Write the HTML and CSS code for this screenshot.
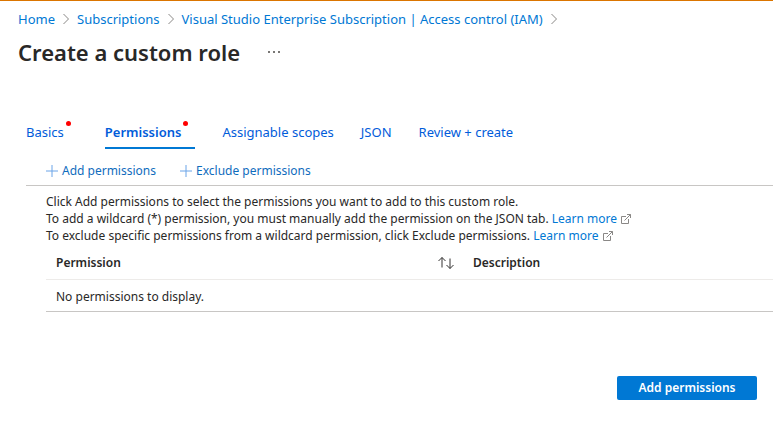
FILE: index.html
```html
<!DOCTYPE html>
<html lang="en">
<head>
<meta charset="utf-8">
<meta name="viewport" content="width=device-width, initial-scale=1">
<title>Create a custom role</title>
<link rel="stylesheet" href="styles.css">
</head>
<body>
<svg class="sprite" aria-hidden="true">
  <symbol id="chevron" viewBox="0 0 8 12"><path d="M1.5 1 6.5 6 1.5 11"/></symbol>
  <symbol id="plus" viewBox="0 0 12 12"><path d="M6 0v12M0 6h12"/></symbol>
  <symbol id="external" viewBox="0 0 12 12"><path d="M6 3.5H1.500v7h7V6M7 1.500h3.500V5M10.500 1.500 4.500 7.500"/></symbol>
  <symbol id="sort" viewBox="0 0 18 14"><path d="M5 1.500v10M1.500 5 5 1.500 8.500 5M13 2.500v10M9.500 9 13 12.500 16.500 9"/></symbol>
</svg>
<header class="header">
  <nav class="breadcrumb" aria-label="Breadcrumb">
    <a href="#">Home</a><svg class="chevron"><use href="#chevron"/></svg>
    <a href="#">Subscriptions</a><svg class="chevron"><use href="#chevron"/></svg>
    <a href="#">Visual Studio Enterprise Subscription | Access control (IAM)</a><svg class="chevron"><use href="#chevron"/></svg>
  </nav>
  <div class="title-row">
    <h1>Create a custom role</h1>
    <button class="more" type="button" aria-label="More"><svg viewBox="0 0 12 2"><path d="M0 0h2v2H0zM5 0h2v2H5zM10 0h2v2h-2z"/></svg></button>
  </div>
</header>
<main class="main">
  <nav class="tabs" aria-label="Steps">
    <a class="tab flagged" href="#">Basics</a>
    <a class="tab flagged active" href="#" aria-current="step">Permissions</a>
    <a class="tab" href="#">Assignable scopes</a>
    <a class="tab" href="#">JSON</a>
    <a class="tab" href="#">Review + create</a>
  </nav>
  <div class="toolbar">
    <button class="command" type="button"><svg><use href="#plus"/></svg>Add permissions</button>
    <button class="command" type="button"><svg><use href="#plus"/></svg>Exclude permissions</button>
  </div>
  <section class="content">
    <p>Click Add permissions to select the permissions you want to add to this custom role.</p>
    <p>To add a wildcard (*) permission, you must manually add the permission on the JSON tab. <a href="#">Learn more <svg class="external"><use href="#external"/></svg></a></p>
    <p>To exclude specific permissions from a wildcard permission, click Exclude permissions. <a href="#">Learn more <svg class="external"><use href="#external"/></svg></a></p>
    <table class="grid">
      <thead>
        <tr>
          <th class="permission" scope="col"><div class="heading">Permission<svg class="sort"><use href="#sort"/></svg></div></th>
          <th scope="col">Description</th>
        </tr>
      </thead>
      <tbody>
        <tr><td colspan="2">No permissions to display.</td></tr>
      </tbody>
    </table>
  </section>
  <div class="actions"><button class="primary" type="button">Add permissions</button></div>
</main>
</body>
</html>
```

FILE: styles.css
```css
* { box-sizing: border-box; }
body {
  margin: 0;
  border-top: 1px solid #db7500;
  background: #fff;
  color: #292827;
  font: 12px/17px "Segoe UI", "Noto Sans", "Open Sans", sans-serif;
}
a { color: #0078d4; text-decoration: none; }
button { border: 0; padding: 0; background: none; font: inherit; color: inherit; }
svg { fill: none; stroke: currentColor; }
h1, p { margin: 0; }
.sprite { position: absolute; width: 0; height: 0; }

.header { padding: 8px 18px 0; }
.breadcrumb { display: flex; align-items: center; gap: 7px; font-size: 13px; line-height: 20px; white-space: nowrap; }
.chevron { width: 8px; height: 12px; color: #8a8886; }
.title-row { display: flex; align-items: center; gap: 28px; margin-top: 7px; }
h1 { font-size: 22px; line-height: 32px; font-weight: 600; }
.more { display: flex; color: #797775; }
.more svg { width: 12px; height: 2px; fill: currentColor; stroke: none; }

.main { padding: 48px 0 24px 26px; }
.tabs { display: flex; gap: 27px; font-size: 13px; }
.tab { position: relative; padding: 7px 0 6px; line-height: 18px; color: #015cda; white-space: nowrap; }
.flagged { padding-right: 14px; }
.flagged::after {
  content: "";
  position: absolute;
  top: 5px;
  right: 7px;
  width: 5px;
  height: 5px;
  border-radius: 50%;
  background: #f00;
}
.active { border-bottom: 2px solid #0078d4; font-weight: 600; }
.toolbar { display: flex; gap: 24px; padding: 12px 20px 4px; border-bottom: 1px solid #c8c6c4; }
.command { display: flex; align-items: center; gap: 4px; line-height: 20px; color: #0f6cbd; }
.command svg { width: 12px; height: 12px; color: #6ba4e8; }

.content { padding: 7px 0 0 20px; }
.external { width: 12px; height: 12px; vertical-align: -2px; color: #8a8886; }
.grid { width: 100%; border-collapse: collapse; border-bottom: 1px solid #c8c6c4; table-layout: fixed; }
.grid td { padding: 8px 10px 6px; }
.grid th { padding: 10px 10px 8px; text-align: left; font-weight: 600; border-bottom: 1px solid #edebe9; }
.grid .permission { width: 417px; padding-right: 8px; }
.heading { display: flex; align-items: center; justify-content: space-between; }
.sort { width: 18px; height: 14px; color: #323130; }
.actions { display: flex; justify-content: flex-end; padding: 64px 16px 0 0; }
.primary { min-width: 140px; padding: 0 20px; border-radius: 2px; background: #0078d4; color: #fff; font-weight: 600; line-height: 24px; }
```
